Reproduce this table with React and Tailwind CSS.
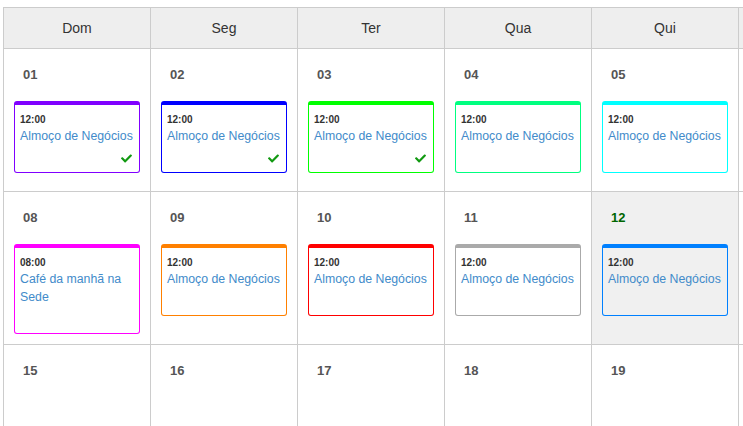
import { FaCheck } from 'react-icons/fa';

// Only the first five weekdays fit on screen; the sixth column peeks in at the edge.
const days = ['Dom', 'Seg', 'Ter', 'Qua', 'Qui'];

const lunch = (color, done = false) => ({ time: '12:00', title: 'Almoço de Negócios', color, done });

const weeks = [
  [
    { day: '01', event: lunch('#8000ff', true) },
    { day: '02', event: lunch('#0000ff', true) },
    { day: '03', event: lunch('#00ff00', true) },
    { day: '04', event: lunch('#00ff80') },
    { day: '05', event: lunch('#00ffff') },
  ],
  [
    { day: '08', event: { time: '08:00', title: 'Café da manhã na Sede', color: '#ff00ff' } },
    { day: '09', event: lunch('#ff8000') },
    { day: '10', event: lunch('#ff0000') },
    { day: '11', event: lunch('#aaaaaa') },
    { day: '12', event: lunch('#0080ff'), today: true },
  ],
  [{ day: '15' }, { day: '16' }, { day: '17' }, { day: '18' }, { day: '19' }],
];

const EventCard = ({ event }) => (
  <div
    className="mx-[10px] flex flex-col rounded-[3px] border border-t-4 px-[5px] pt-[8px]"
    style={{ borderColor: event.color }}
  >
    <div className="text-[10px] font-bold leading-[14px] text-[#333]">{event.time}</div>
    <div className="text-[12.3px] leading-[18px] text-[#428bca]">{event.title}</div>
    <div className="flex h-[27px] items-center justify-end pr-[2px]">
      {event.done && <FaCheck className="text-[11px] text-[#119911]" />}
    </div>
  </div>
);

const App = () => {
  return (
    <div
      className="h-[426px] w-[743px] overflow-hidden bg-white pl-[3px] pt-[7px]"
      style={{ fontFamily: '"Liberation Sans", Arial, sans-serif' }}
    >
      <div className="grid w-max grid-cols-[repeat(5,147px)_147px] border-l border-t border-[#cccccc]">
        {days.map((d) => (
          <div
            key={d}
            className="flex h-[41px] items-center justify-center border-b border-r border-[#cccccc] bg-[#eeeeee] text-[14px] text-[#333]"
          >
            {d}
          </div>
        ))}
        <div className="h-[41px] border-b border-r border-[#cccccc] bg-[#eeeeee]" />
        {weeks.map((week, i) => [
          ...week.map((cell) => (
            <div
              key={cell.day}
              className={`min-h-[143px] border-b border-r border-[#cccccc] pb-[10px] pt-[10px] ${
                cell.today ? 'bg-[#f0f0f0]' : 'bg-white'
              }`}
            >
              <div
                className={`mb-[10px] flex h-[32px] items-center pl-[19px] text-[13px] font-bold ${
                  cell.today ? 'text-[#006600]' : 'text-[#555]'
                }`}
              >
                {cell.day}
              </div>
              {cell.event && <EventCard event={cell.event} />}
            </div>
          )),
          <div key={`edge-${i}`} className="min-h-[143px] border-b border-r border-[#cccccc] bg-white" />,
        ])}
      </div>
    </div>
  );
};

export default App;
